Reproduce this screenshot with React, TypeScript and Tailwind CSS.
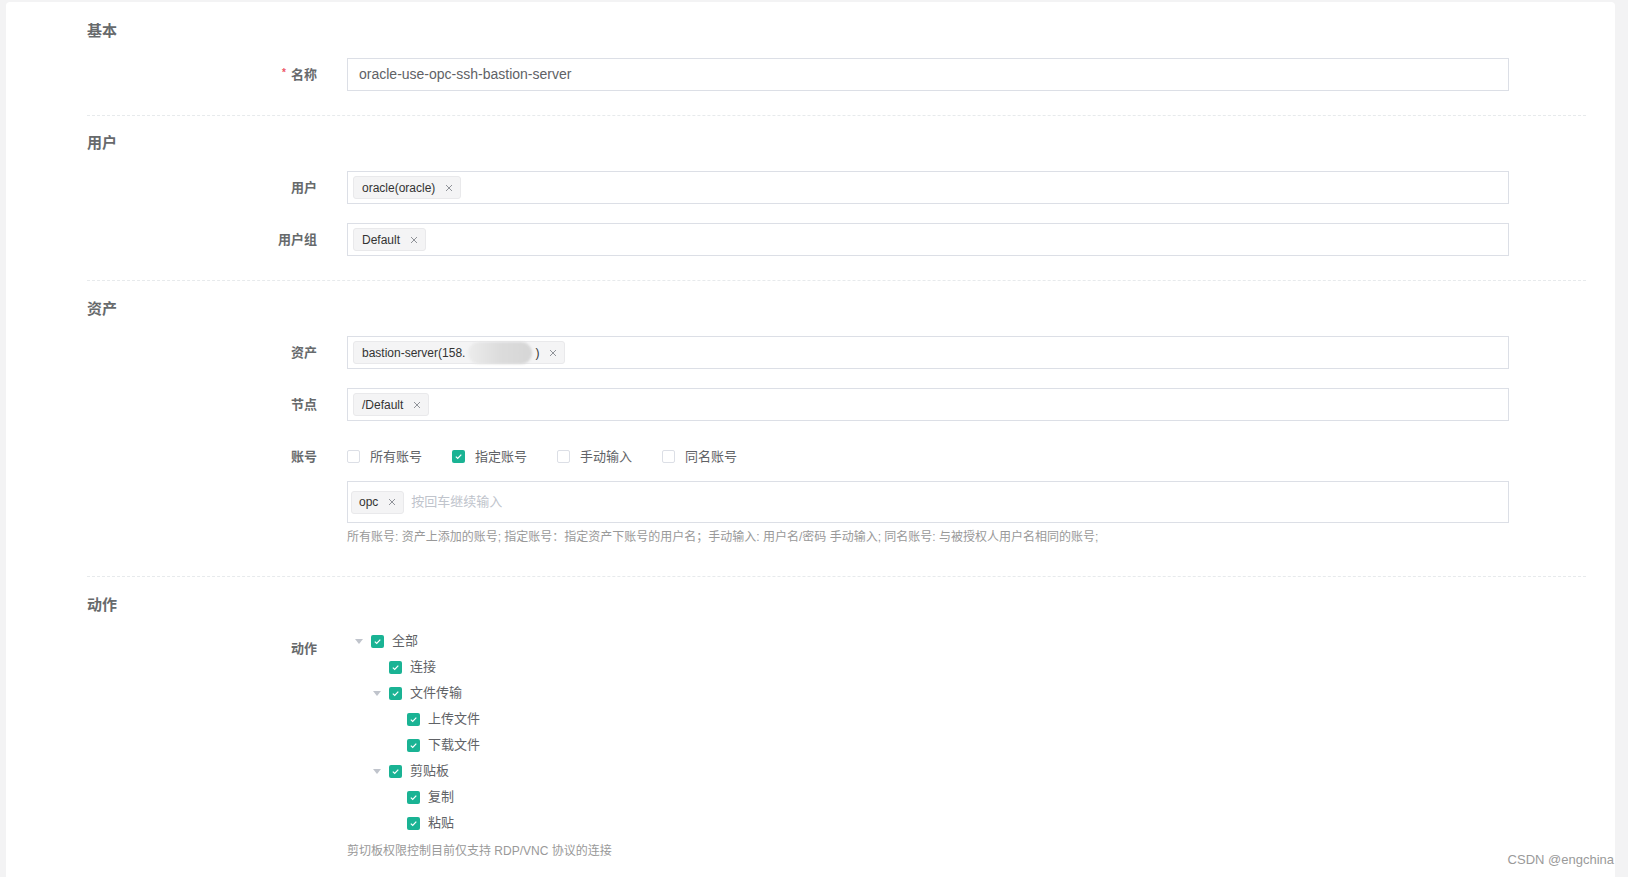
import React from "react";

const FONT = { fontFamily: '"Liberation Sans", "Noto Sans CJK SC", sans-serif' };

function CloseX() {
  return (
    <svg width="8" height="8" viewBox="0 0 8 8" className="block">
      <path d="M1 1L7 7M7 1L1 7" stroke="#909399" strokeWidth="1" fill="none" />
    </svg>
  );
}

function Tag({ children, compact }: { children: React.ReactNode; compact?: boolean }) {
  return (
    <span
      className={
        "inline-flex h-[23px] items-center rounded-[3px] border border-[#e9e9eb] bg-[#f4f4f5] pr-[4px] text-[12px] text-[#333333] " +
        (compact ? "pl-[7px]" : "pl-[8px]")
      }
    >
      <span className="leading-none">{children}</span>
      <span className="ml-[7px] flex h-[14px] w-[14px] items-center justify-center">
        <CloseX />
      </span>
    </span>
  );
}

function Check({ checked }: { checked?: boolean }) {
  if (checked) {
    return (
      <span className="flex h-[13px] w-[13px] shrink-0 items-center justify-center rounded-[2px] bg-[#1ab394]">
        <svg width="9" height="9" viewBox="0 0 9 9">
          <path d="M1.8 4.6L3.7 6.4L7.3 2.6" stroke="#ffffff" strokeWidth="1.2" fill="none" />
        </svg>
      </span>
    );
  }
  return <span className="block h-[13px] w-[13px] shrink-0 rounded-[2px] border border-[#dcdfe6] bg-white" />;
}

function Title({ children, className }: { children: React.ReactNode; className?: string }) {
  return (
    <div className={"text-[15px] font-bold leading-[20px] text-[#676a6c] " + (className ?? "")}>{children}</div>
  );
}

function Label({ children, required }: { children: React.ReactNode; required?: boolean }) {
  return (
    <div className="flex h-[33px] w-[230px] shrink-0 items-center justify-end text-[13px] font-bold text-[#676a6c]">
      {required ? <span className="mr-[5px] -mt-[5px] text-[10px] text-[#ed5565]">*</span> : null}
      {children}
    </div>
  );
}

function Box({ children, tall }: { children?: React.ReactNode; tall?: boolean }) {
  return (
    <div
      className={
        "flex w-[1162px] items-center border border-[#dcdfe6] bg-white " +
        (tall ? "h-[42px] pl-[3px]" : "h-[33px] pl-[5px]")
      }
    >
      {children}
    </div>
  );
}

function Row({ label, required, className, children }: { label: string; required?: boolean; className?: string; children: React.ReactNode }) {
  return (
    <div className={"flex " + (className ?? "")}>
      <Label required={required}>{label}</Label>
      <div className="ml-[30px]">{children}</div>
    </div>
  );
}

function Divider({ className }: { className?: string }) {
  return <div className={"border-t border-dashed border-[#e7eaec] " + (className ?? "")} />;
}

const accounts = [
  { label: "所有账号", checked: false },
  { label: "指定账号", checked: true },
  { label: "手动输入", checked: false },
  { label: "同名账号", checked: false },
];

const tree = [
  { label: "全部", level: 0, arrow: true },
  { label: "连接", level: 1, arrow: false },
  { label: "文件传输", level: 1, arrow: true },
  { label: "上传文件", level: 2, arrow: false },
  { label: "下载文件", level: 2, arrow: false },
  { label: "剪贴板", level: 1, arrow: true },
  { label: "复制", level: 2, arrow: false },
  { label: "粘贴", level: 2, arrow: false },
];

const indent = ["pl-0", "pl-[18px]", "pl-[36px]"];

export default function App() {
  return (
    <div className="relative h-[877px] overflow-hidden bg-[#f3f3f4] pl-[6px] pr-[13px] pt-[2px]" style={FONT}>
      <div className="h-[900px] rounded-[4px] bg-white pl-[81px] pr-[29px] pt-[19px]">
        {/* 基本 */}
        <Title>基本</Title>
        <Row label="名称" required className="mt-[17px]">
          <div className="flex h-[33px] w-[1162px] items-center border border-[#dcdfe6] bg-white pl-[11px] text-[14px] text-[#606266]">
            oracle-use-opc-ssh-bastion-server
          </div>
        </Row>
        <Divider className="mt-[24px]" />

        {/* 用户 */}
        <Title className="mt-[17px]">用户</Title>
        <Row label="用户" className="mt-[18px]">
          <Box>
            <Tag>oracle(oracle)</Tag>
          </Box>
        </Row>
        <Row label="用户组" className="mt-[19px]">
          <Box>
            <Tag>Default</Tag>
          </Box>
        </Row>
        <Divider className="mt-[24px]" />

        {/* 资产 */}
        <Title className="mt-[18px]">资产</Title>
        <Row label="资产" className="mt-[17px]">
          <Box>
            <Tag>
              <span className="inline-flex items-center">
                bastion-server(158.
                <span className="mx-[3px] inline-block h-[22px] w-[64px] rounded-full bg-gradient-to-r from-[#ececec] via-[#dcdcdc] to-[#d6d6d6] blur-[1px]" />
                )
              </span>
            </Tag>
          </Box>
        </Row>
        <Row label="节点" className="mt-[19px]">
          <Box>
            <Tag>/Default</Tag>
          </Box>
        </Row>
        <Row label="账号" className="mt-[19px]">
          <div className="flex h-[33px] items-center">
            {accounts.map((a) => (
              <label key={a.label} className="mr-[30px] flex items-center text-[13px] text-[#606266]">
                <Check checked={a.checked} />
                <span className="pl-[10px]">{a.label}</span>
              </label>
            ))}
          </div>
          <div className="mt-[8px]">
            <Box tall>
              <Tag compact>opc</Tag>
              <span className="ml-[7px] text-[13px] text-[#c0c4cc]">按回车继续输入</span>
            </Box>
          </div>
          <div className="mt-[5px] text-[12px] leading-[18px] text-[#999999]">
            所有账号: 资产上添加的账号; 指定账号：指定资产下账号的用户名；手动输入: 用户名/密码 手动输入; 同名账号: 与被授权人用户名相同的账号;
          </div>
        </Row>
        <Divider className="mt-[30px]" />

        {/* 动作 */}
        <Title className="mt-[18px]">动作</Title>
        <div className="mt-[13px] flex">
          <div className="mt-[11px] w-[230px] shrink-0 text-right text-[13px] font-bold leading-[20px] text-[#676a6c]">
            动作
          </div>
          <div className="ml-[30px]">
            {tree.map((n) => (
              <div key={n.label} className={"flex h-[26px] items-center " + indent[n.level]}>
                <span className="flex w-[24px] justify-center">
                  {n.arrow ? (
                    <svg width="8" height="5" viewBox="0 0 8 5" className="block">
                      <path d="M0 0H8L4 5Z" fill="#c0c4cc" />
                    </svg>
                  ) : null}
                </span>
                <Check checked />
                <span className="ml-[8px] text-[13px] text-[#606266]">{n.label}</span>
              </div>
            ))}
            <div className="mt-[6px] text-[12px] leading-[18px] text-[#999999]">
              剪切板权限控制目前仅支持 RDP/VNC 协议的连接
            </div>
          </div>
        </div>
      </div>
      <div className="absolute bottom-[8px] right-[14px] text-[13px] text-[#9a9a9a]">CSDN @engchina</div>
    </div>
  );
}
